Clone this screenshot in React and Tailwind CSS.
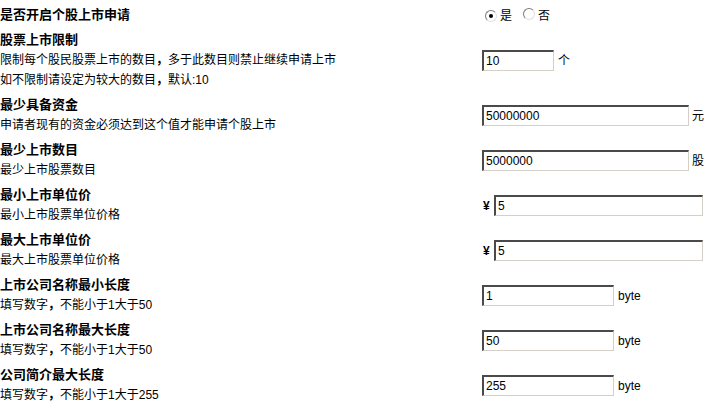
import React from "react";

const font = "font-['Liberation_Sans','Noto_Sans_CJK_SC',sans-serif]";

function Box({ value, w }) {
  return (
    <input
      readOnly
      value={value}
      className={`${w} h-[21px] pl-[2px] text-[12px] leading-[17px] text-black bg-white outline-none border-solid border-t-[2px] border-l-[2px] border-r-[1px] border-b-[1px] border-t-[#4a4a4a] border-l-[#4a4a4a] border-r-[#d4d0c8] border-b-[#d4d0c8] ${font}`}
    />
  );
}

function Radio({ checked }) {
  return (
    <span className="relative inline-block w-[12px] h-[12px] rounded-full bg-white border border-t-[#7a7a7a] border-l-[#7a7a7a] border-r-[#e0e0e0] border-b-[#e0e0e0]">
      {checked && (
        <span className="absolute left-[3px] top-[3px] w-[4px] h-[4px] rounded-full bg-black" />
      )}
    </span>
  );
}

function Desc({ text }) {
  const parts = text.split("，");
  return (
    <>
      {parts.map((p, i) => (
        <React.Fragment key={i}>
          {p}
          {i < parts.length - 1 && <span className="font-bold">，</span>}
        </React.Fragment>
      ))}
    </>
  );
}

function Row({ title, desc = [], children }) {
  return (
    <>
      <div className="pt-[2px] pb-[3px]">
        <div className="h-[20px] leading-[20px] text-[13px] font-bold">{title}</div>
        {desc.map((d, i) => (
          <div key={i} className="h-[20px] leading-[20px] text-[12px]">
            <Desc text={d} />
          </div>
        ))}
      </div>
      <div className="flex items-center text-[12px]">{children}</div>
    </>
  );
}

export default function App() {
  return (
    <div className={`w-[720px] h-[411px] bg-white text-black overflow-hidden pt-[3px] ${font}`}>
      <div className="grid grid-cols-[482px_1fr]">
        <Row title="是否开启个股上市申请">
          <span className="ml-[3px] flex items-center">
            <Radio checked />
            <span className="ml-[3px]">是</span>
            <span className="ml-[11px]">
              <Radio />
            </span>
            <span className="ml-[3px]">否</span>
          </span>
        </Row>
        <Row
          title="股票上市限制"
          desc={[
            "限制每个股民股票上市的数目，多于此数目则禁止继续申请上市",
            "如不限制请设定为较大的数目，默认:10",
          ]}
        >
          <Box value="10" w="w-[72px]" />
          <span className="ml-[4px]">个</span>
        </Row>
        <Row title="最少具备资金" desc={["申请者现有的资金必须达到这个值才能申请个股上市"]}>
          <Box value="50000000" w="w-[207px]" />
          <span className="ml-[3px]">元</span>
        </Row>
        <Row title="最少上市数目" desc={["最少上市股票数目"]}>
          <Box value="5000000" w="w-[207px]" />
          <span className="ml-[3px]">股</span>
        </Row>
        <Row title="最小上市单位价" desc={["最小上市股票单位价格"]}>
          <span className="font-bold w-[12px] pl-[1px]">¥</span>
          <Box value="5" w="w-[209px]" />
        </Row>
        <Row title="最大上市单位价" desc={["最大上市股票单位价格"]}>
          <span className="font-bold w-[12px] pl-[1px]">¥</span>
          <Box value="5" w="w-[209px]" />
        </Row>
        <Row title="上市公司名称最小长度" desc={["填写数字，不能小于1大于50"]}>
          <Box value="1" w="w-[132px]" />
          <span className="ml-[4px]">byte</span>
        </Row>
        <Row title="上市公司名称最大长度" desc={["填写数字，不能小于1大于50"]}>
          <Box value="50" w="w-[132px]" />
          <span className="ml-[4px]">byte</span>
        </Row>
        <Row title="公司简介最大长度" desc={["填写数字，不能小于1大于255"]}>
          <Box value="255" w="w-[132px]" />
          <span className="ml-[4px]">byte</span>
        </Row>
      </div>
    </div>
  );
}
